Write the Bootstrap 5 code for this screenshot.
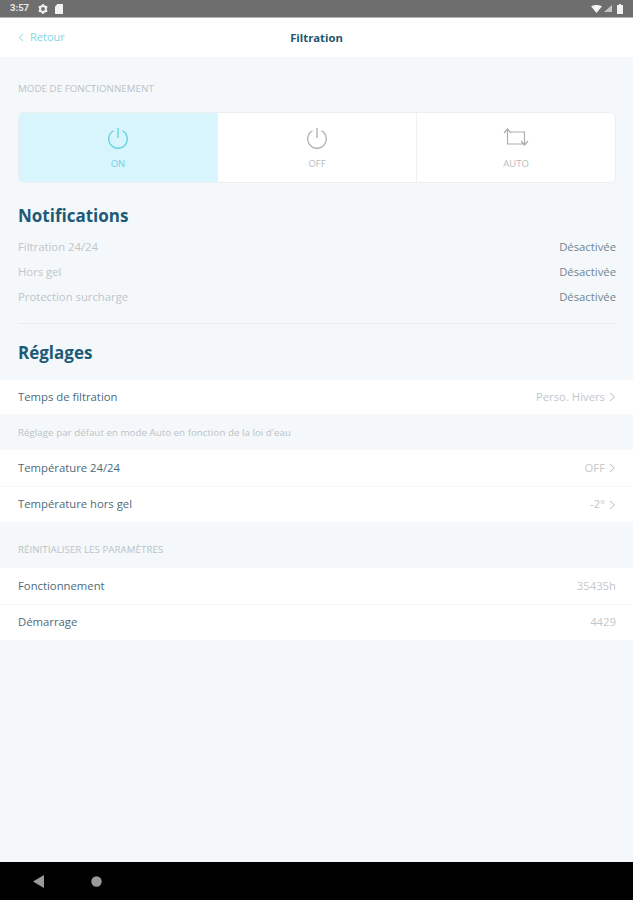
<!DOCTYPE html>
<html lang="fr">
<head>
<meta charset="utf-8">
<title>Filtration</title>
<link rel="stylesheet" href="https://cdn.jsdelivr.net/npm/bootstrap@5.3.0/dist/css/bootstrap.min.css">
<style>
html,body{height:100%;}
body{background:#f4f8fa;font-family:"Open Sans","Noto Sans",sans-serif;color:#3f5f70;overflow:hidden;}
.shell{height:900px;}
.statusbar{height:18px;background:#6e6e6e;border-bottom:1px solid #b5b5b5;padding:0 10px;color:#e6e6e6;font-size:9.500px;font-weight:700;font-family:"Roboto",sans-serif;}
.gap-card{margin-left:7px;}
.gap-gear{margin-left:9px;}
.gap-cell{margin-left:2px;}
.gap-batt{margin-left:5px;}
.topbar{height:39px;background:#fff;padding:0 18px;position:relative;}
.back{color:#7fd6e6;font-size:11px;gap:6px;}
.title{color:#24566f;font-size:11.300px;font-weight:700;}
.capslabel{color:#bcc2c6;font-size:9.800px;text-transform:uppercase;line-height:12px;padding:0 18px;margin:0;}
.segment{margin:0 17px 0 18px;height:71px;background:#fff;border:1px solid #ebeff1;border-radius:6px;overflow:hidden;}
.segcell{flex:1 1 0;color:#b7bcc0;font-size:9.500px;line-height:12px;gap:9px;padding-top:14px;}
.segcell+.segcell{border-left:1px solid #edf1f3;}
.segcell.active{background:#d8f5fe;color:#72d3e2;}
.heading{color:#1d5a78;font-size:17px;font-weight:700;line-height:22px;padding:0 18px;margin:0;}
.notifrow{height:25px;padding:0 17px 0 18px;font-size:11.300px;color:#c0c5c9;}
.notifrow .state{color:#6f8592;}
.sep{height:1px;background:#e9edef;margin:0 17px 0 18px;}
.whitegroup{background:#fff;}
.setrow{padding:0 17px 0 18px;font-size:11.300px;color:#4d6a7a;height:36px;}
.setrow.first-short{height:34px;}
.setrow .val{color:#c3c7ca;gap:4px;}
.setrow+.setrow{border-top:1px solid #f4f7f9;height:36px;}
.note{color:#bcc2c6;font-size:9.800px;line-height:12px;padding:0 18px;margin:0;}
.bottomnav{height:38px;background:#000;padding-left:33px;gap:46px;}
.m-a{margin-top:26px;}.m-b{margin-top:17px;}.m-c{margin-top:22px;}.m-d{margin-top:8px;}.m-f{margin-top:18px;}.m-s{margin-top:13px;}.m-g{margin-top:16px;}.m-h{margin-top:13px;}.m-k{margin-top:11px;}.m-i{margin-top:22px;}.m-j{margin-top:12px;}
</style>
</head>
<body>
<div class="shell d-flex flex-column">
  <div class="statusbar d-flex align-items-center">
    <span>3:57</span>
    <svg class="gap-gear" width="10" height="10" viewBox="0 0 10 10"><circle cx="5" cy="5" r="2.900" fill="none" stroke="#f2f2f2" stroke-width="2"/><path d="M5 0v2M5 8v2M0.700 2.500l1.700 1M7.600 6.500l1.700 1M0.700 7.500l1.700-1M7.600 3.500l1.700-1" stroke="#f2f2f2" stroke-width="1.600"/></svg>
    <svg class="gap-card" width="8" height="10" viewBox="0 0 8 10"><path d="M2.500 0H8v10H0V2.500z" fill="#f2f2f2"/></svg>
    <svg class="ms-auto" width="11" height="8" viewBox="0 0 11 8"><path d="M0 1.200Q5.500-1.300 11 1.200L5.500 8z" fill="#f5f5f5"/></svg>
    <svg class="gap-cell" width="8" height="7" viewBox="0 0 8 7"><path d="M8 0V7H0z" fill="#c4c4c4"/></svg>
    <svg class="gap-batt" width="6" height="10" viewBox="0 0 6 10"><path d="M2 0h2v1h2v9H0V1h2z" fill="#f2f2f2"/></svg>
  </div>
  <div class="topbar d-flex align-items-center">
    <div class="back d-flex align-items-center">
      <svg width="6" height="9" viewBox="0 0 6 9"><path d="M5 .8 1.200 4.500 5 8.200" fill="none" stroke="#7fd6e6" stroke-width="1"/></svg>
      <span>Retour</span>
    </div>
    <div class="title position-absolute top-50 start-50 translate-middle">Filtration</div>
  </div>
  <p class="capslabel m-a">Mode de fonctionnement</p>
  <div class="segment d-flex m-b">
    <div class="segcell active d-flex flex-column align-items-center">
      <svg width="22" height="22" viewBox="0 0 22 22"><path d="M6.500 3.800a9.300 9.300 0 1 0 9 0M11 1v10" fill="none" stroke="#5fcfe0" stroke-width="1.300"/></svg>
      <span>ON</span>
    </div>
    <div class="segcell d-flex flex-column align-items-center">
      <svg width="22" height="22" viewBox="0 0 22 22"><path d="M6.500 3.800a9.300 9.300 0 1 0 9 0M11 1v10" fill="none" stroke="#a9aeb2" stroke-width="1.300"/></svg>
      <span>OFF</span>
    </div>
    <div class="segcell d-flex flex-column align-items-center">
      <svg width="26" height="22" viewBox="0 0 26 22"><path d="M1 6 4.500 2 8 6M4.500 2.500V17H20M25 14l-3.500 4-3.500-4M21.500 17.500V5H7" fill="none" stroke="#a9aeb2" stroke-width="1.200"/></svg>
      <span>AUTO</span>
    </div>
  </div>
  <h2 class="heading m-c">Notifications</h2>
  <div class="m-d">
    <div class="notifrow d-flex justify-content-between align-items-center"><span>Filtration 24/24</span><span class="state">Désactivée</span></div>
    <div class="notifrow d-flex justify-content-between align-items-center"><span>Hors gel</span><span class="state">Désactivée</span></div>
    <div class="notifrow d-flex justify-content-between align-items-center"><span>Protection surcharge</span><span class="state">Désactivée</span></div>
  </div>
  <div class="sep m-s"></div>
  <h2 class="heading m-f">Réglages</h2>
  <div class="whitegroup m-g">
    <div class="setrow first-short d-flex justify-content-between align-items-center"><span>Temps de filtration</span><span class="val d-flex align-items-center">Perso. Hivers <svg width="7" height="10" viewBox="0 0 7 10"><path d="M1 1l4.500 4L1 9" fill="none" stroke="#b5babe"/></svg></span></div>
  </div>
  <p class="note m-h">Réglage par défaut en mode Auto en fonction de la loi d'eau</p>
  <div class="whitegroup m-k">
    <div class="setrow d-flex justify-content-between align-items-center"><span>Température 24/24</span><span class="val d-flex align-items-center">OFF <svg width="7" height="10" viewBox="0 0 7 10"><path d="M1 1l4.500 4L1 9" fill="none" stroke="#b5babe"/></svg></span></div>
    <div class="setrow d-flex justify-content-between align-items-center"><span>Température hors gel</span><span class="val d-flex align-items-center">-2° <svg width="7" height="10" viewBox="0 0 7 10"><path d="M1 1l4.500 4L1 9" fill="none" stroke="#b5babe"/></svg></span></div>
  </div>
  <p class="capslabel m-i">Réinitialiser les paramètres</p>
  <div class="whitegroup m-j">
    <div class="setrow d-flex justify-content-between align-items-center"><span>Fonctionnement</span><span class="val">35435h</span></div>
    <div class="setrow d-flex justify-content-between align-items-center"><span>Démarrage</span><span class="val">4429</span></div>
  </div>
  <div class="flex-grow-1"></div>
  <div class="bottomnav d-flex align-items-center">
    <svg width="12" height="13" viewBox="0 0 12 13"><path d="M11 0V13L0 6.500z" fill="#9a9a9a"/></svg>
    <svg width="11" height="11" viewBox="0 0 11 11"><circle cx="5.500" cy="5.500" r="5.200" fill="#9a9a9a"/></svg>
  </div>
</div>
</body>
</html>
